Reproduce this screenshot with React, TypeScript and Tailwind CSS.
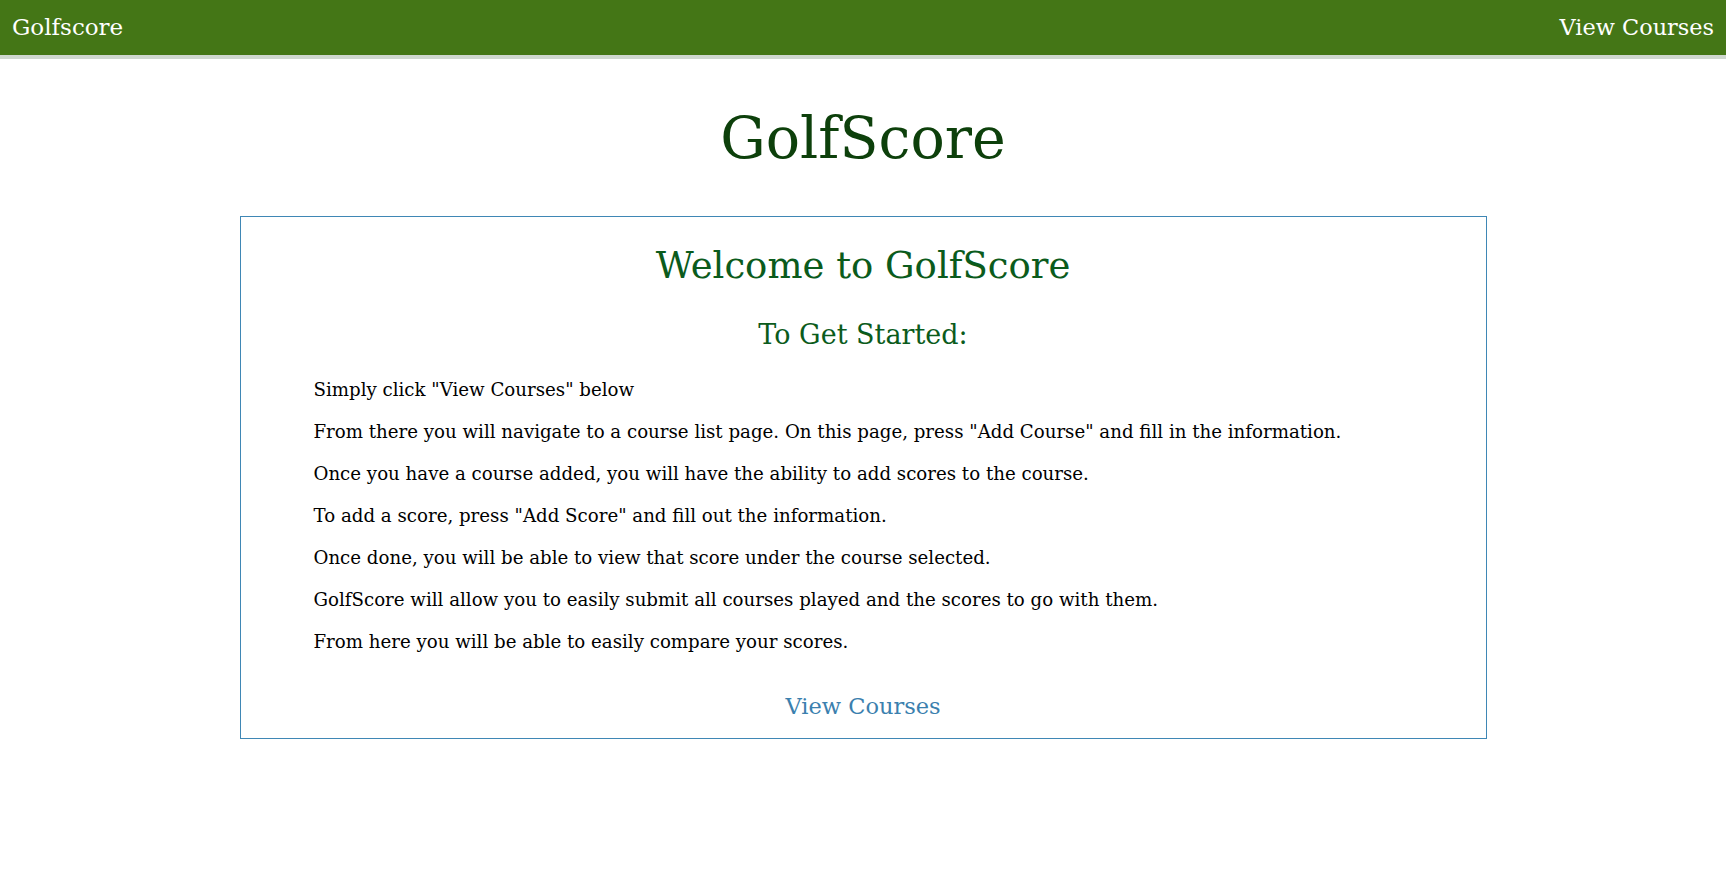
const steps = [
  'Simply click "View Courses" below',
  'From there you will navigate to a course list page. On this page, press "Add Course" and fill in the information.',
  'Once you have a course added, you will have the ability to add scores to the course.',
  'To add a score, press "Add Score" and fill out the information.',
  'Once done, you will be able to view that score under the course selected.',
  'GolfScore will allow you to easily submit all courses played and the scores to go with them.',
  'From here you will be able to easily compare your scores.',
]

export default function App() {
  return (
    <div className="min-h-screen bg-white font-['DejaVu_Serif',serif]">
      {/* navbar */}
      <nav className="flex h-[59px] items-center justify-between border-b-4 border-[#cfd7cf] bg-[#447616] px-3 text-white">
        <a className="text-[23px]">Golfscore</a>
        <a className="text-[22.4px]">View Courses</a>
      </nav>

      <h1 className="mt-[39px] text-center text-[57px] leading-[80px] text-[#0d400b]">GolfScore</h1>

      {/* welcome box */}
      <div className="mx-auto mt-[38px] w-[1247px] border border-[#3f87b5] pb-[14px] pt-[25px]">
        <h2 className="text-center text-[37px] leading-[48px] text-[#0b5b1c]">Welcome to GolfScore</h2>
        <h3 className="mt-[27px] text-center text-[27px] leading-[36px] text-[#0b5b1c]">To Get Started:</h3>
        <div className="mt-[16px] pl-[73px] text-[18.2px] leading-[42px] text-black">
          {steps.map((s) => (
            <p key={s}>{s}</p>
          ))}
        </div>
        <div className="mt-[25px] text-center">
          <a className="text-[22.5px] leading-[36px] text-[#3b80ae]">View Courses</a>
        </div>
      </div>
    </div>
  )
}
